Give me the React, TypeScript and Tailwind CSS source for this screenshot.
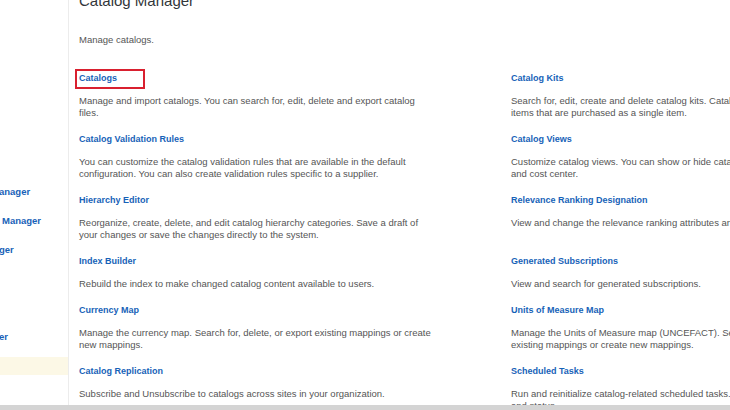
const items: [string, string][][] = [
  [
    ["Catalogs", "Manage and import catalogs. You can search for, edit, delete and export catalog files."],
    ["Catalog Kits", "Search for, edit, create and delete catalog kits. Catalog kits are groups of catalog items that are purchased as a single item."],
  ],
  [
    ["Catalog Validation Rules", "You can customize the catalog validation rules that are available in the default configuration. You can also create validation rules specific to a supplier."],
    ["Catalog Views", "Customize catalog views. You can show or hide catalog items by supplier\nand cost center."],
  ],
  [
    ["Hierarchy Editor", "Reorganize, create, delete, and edit catalog hierarchy categories. Save a draft of your changes or save the changes directly to the system."],
    ["Relevance Ranking Designation", "View and change the relevance ranking attributes and weights."],
  ],
  [
    ["Index Builder", "Rebuild the index to make changed catalog content available to users."],
    ["Generated Subscriptions", "View and search for generated subscriptions."],
  ],
  [
    ["Currency Map", "Manage the currency map. Search for, delete, or export existing mappings or create new mappings."],
    ["Units of Measure Map", "Manage the Units of Measure map (UNCEFACT). Search for, delete, or export existing mappings or create new mappings."],
  ],
  [
    ["Catalog Replication", "Subscribe and Unsubscribe to catalogs across sites in your organization."],
    ["Scheduled Tasks", "Run and reinitialize catalog-related scheduled tasks. View task schedules\nand status."],
  ],
];

const sideItems = ["anager", "Manager", "ger", "", "", "er"];

function Item({ title, desc, boxed }: { title: string; desc: string; boxed?: boolean }) {
  return (
    <div className="pb-[14px] pr-[76px]">
      <div className="relative text-[9px] font-bold leading-[12px] text-[#1762b8]">
        {title}
        {boxed && (
          <div className="absolute -left-[4px] -top-[3px] h-[20px] w-[70px] border-2 border-[#d9202f]" />
        )}
      </div>
      <p className="mt-[11px] whitespace-pre-line text-[9.5px] leading-[12px] text-[#555]">{desc}</p>
    </div>
  );
}

export default function App() {
  return (
    <div
      className="flex h-[410px] w-[730px] flex-col overflow-hidden bg-white"
      style={{ fontFamily: '"Liberation Sans", Arial, sans-serif' }}
    >
      <div className="flex min-h-0 flex-1">
        <aside className="w-[69px] shrink-0 overflow-hidden border-r border-[#ececec] pt-[178px]">
          {sideItems.map((s, i) => (
            <div
              key={i}
              className={`flex h-[29px] items-center whitespace-nowrap text-[9.5px] font-bold text-[#1762b8] ${
                s === "Manager" ? "pl-[2px]" : "-ml-[1px]"
              }`}
            >
              {s}
            </div>
          ))}
          <div className="mt-[5px] h-[18px] bg-[#fcf8e6]" />
        </aside>
        <main className="min-w-0 flex-1 overflow-hidden pl-[10px]">
          <h1 className="-mt-[8px] whitespace-nowrap text-[15px] leading-[18px] text-[#32363a]">
            Catalog Manager
          </h1>
          <p className="mt-[24px] text-[9.5px] leading-[12px] text-[#555]">Manage catalogs.</p>
          <div className="mt-[26px] grid w-[864px] grid-cols-[432px_432px]">
            {items.map((row, r) =>
              row.map(([t, d], c) => (
                <Item key={`${r}-${c}`} title={t} desc={d} boxed={r === 0 && c === 0} />
              ))
            )}
          </div>
        </main>
      </div>
      <div className="h-[5px] shrink-0 bg-[#d4d4d4]" />
    </div>
  );
}
